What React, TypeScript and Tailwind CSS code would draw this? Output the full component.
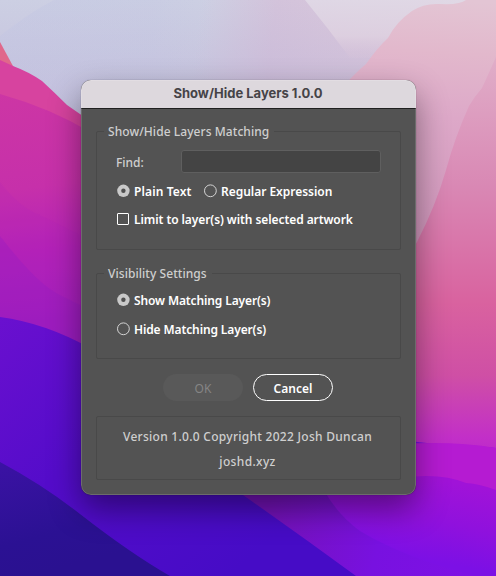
import type { ReactNode } from "react";

function Wallpaper() {
  return (
    <svg className="absolute inset-0" width="496" height="576" viewBox="0 0 496 576" fill="none">
      <defs>
        <linearGradient id="sky" x1="0" y1="0" x2="496" y2="60" gradientUnits="userSpaceOnUse">
          <stop stopColor="#cccfe3" />
          <stop offset=".4" stopColor="#cdd0e3" />
          <stop offset=".55" stopColor="#d3c3db" />
          <stop offset="1" stopColor="#e0cedc" />
        </linearGradient>
        <linearGradient id="haze" x1="0" y1="0" x2="0" y2="140" gradientUnits="userSpaceOnUse">
          <stop stopColor="#bfb2d6" stopOpacity="0" />
          <stop offset="1" stopColor="#bfb2d6" stopOpacity=".75" />
        </linearGradient>
        <linearGradient id="cloud" x1="330" y1="0" x2="330" y2="60" gradientUnits="userSpaceOnUse">
          <stop stopColor="#e0d9e6" stopOpacity=".9" />
          <stop offset=".6" stopColor="#dfd2e1" stopOpacity=".8" />
          <stop offset="1" stopColor="#d8c2d8" stopOpacity=".1" />
        </linearGradient>
        <linearGradient id="mist" x1="60" y1="0" x2="215" y2="0" gradientUnits="userSpaceOnUse">
          <stop stopColor="#bfc3e3" stopOpacity=".3" />
          <stop offset=".6" stopColor="#bfc3e3" stopOpacity=".25" />
          <stop offset="1" stopColor="#bfc3e3" stopOpacity="0" />
        </linearGradient>
        <linearGradient id="rose" x1="440" y1="0" x2="425" y2="260" gradientUnits="userSpaceOnUse">
          <stop stopColor="#e3c5d4" />
          <stop offset=".2" stopColor="#e2b8cc" />
          <stop offset=".45" stopColor="#dda8c8" />
          <stop offset="1" stopColor="#cf94ba" />
        </linearGradient>
        <linearGradient id="rose2" x1="450" y1="60" x2="450" y2="480" gradientUnits="userSpaceOnUse">
          <stop stopColor="#e0adc8" />
          <stop offset=".3" stopColor="#d988b4" />
          <stop offset=".58" stopColor="#d9629f" />
          <stop offset=".75" stopColor="#cf4fa5" />
          <stop offset=".9" stopColor="#c22fc8" />
          <stop offset="1" stopColor="#b41fd0" />
        </linearGradient>
        <linearGradient id="magenta" x1="0" y1="90" x2="30" y2="340" gradientUnits="userSpaceOnUse">
          <stop stopColor="#cd36a4" />
          <stop offset=".4" stopColor="#c630aa" />
          <stop offset=".65" stopColor="#b422b8" />
          <stop offset="1" stopColor="#9d1dbe" />
        </linearGradient>
        <linearGradient id="indigo" x1="0" y1="316" x2="230" y2="576" gradientUnits="userSpaceOnUse">
          <stop stopColor="#6a10cf" />
          <stop offset=".45" stopColor="#540cca" />
          <stop offset="1" stopColor="#460cc6" />
        </linearGradient>
        <linearGradient id="navy" x1="0" y1="462" x2="30" y2="576" gradientUnits="userSpaceOnUse">
          <stop stopColor="#3b12a4" />
          <stop offset=".7" stopColor="#2b1193" />
          <stop offset="1" stopColor="#2a1190" />
        </linearGradient>
        <linearGradient id="violet" x1="270" y1="500" x2="496" y2="560" gradientUnits="userSpaceOnUse">
          <stop stopColor="#7412b8" />
          <stop offset=".5" stopColor="#7811e0" />
          <stop offset="1" stopColor="#8010e6" />
        </linearGradient>
        <linearGradient id="plum" x1="440" y1="480" x2="425" y2="560" gradientUnits="userSpaceOnUse">
          <stop stopColor="#a013d8" />
          <stop offset=".5" stopColor="#9011dd" />
          <stop offset="1" stopColor="#7c10e5" />
        </linearGradient>
      </defs>
      <path d="M0 0H496V576H0Z" fill="url(#sky)" />
      <path d="M0 0H496V180H0Z" fill="url(#haze)" />
      <path d="M0 36Q30 12 54 0H220V130H0Z" fill="url(#mist)" />
      <path d="M305 0H496V60L350 58Q328 28 305 0Z" fill="url(#cloud)" />
      <path d="M340 90Q355 73 366 64Q378 47 388 38Q396 22 412 11Q424 3 440 4Q460 5 466 0H496V480H340Z" fill="url(#rose)" />
      <path d="M496 57Q488 75 482 88Q475 96 469 106Q455 137 446 170Q436 205 417 242L400 270V480H496Z" fill="url(#rose2)" />
      <path d="M0 42L13.5 67L0 70Z" fill="#e0688b" />
      <path d="M0 60L13 66Q29 72 42 81Q55 93 67 105L90 121V360H0Z" fill="#d7439f" />
      <path d="M0 94Q50 108 90 132V360H0Z" fill="url(#magenta)" />
      <path d="M0 182Q20 208 40 215Q70 230 90 240V360H0Z" fill="#ae22bc" opacity=".15" />
      <path d="M0 236Q38 285 60 295L90 310V370H0Z" fill="#911bc2" opacity=".3" />
      <path d="M0 317Q45 323 90 348L300 500 370 576H0Z" fill="url(#indigo)" />
      <path d="M0 462Q43 485 80 514Q130 553 170 576H0Z" fill="url(#navy)" />
      <path d="M180 450L400 440Q450 446 496 448V576H356Q300 535 243 495Z" fill="url(#violet)" />
      <path d="M320 480L410 444Q455 443 496 448V576H475Q405 558 360 531Q339 516 325 492Z" fill="url(#plum)" />
      <path d="M400 444Q455 441 496 448V490Q480 484 466 483Q440 472 400 478Z" fill="#b51bd2" />
    </svg>
  );
}

function Radio({ checked = false }: { checked?: boolean }) {
  return (
    <svg className="h-[14px] w-[14px] shrink-0" viewBox="0 0 14 14">
      {checked ? (
        <>
          <circle cx="7.4" cy="6.8" r="6.2" fill="#c9c9c9" />
          <circle cx="7.4" cy="6.8" r="2.2" fill="#505050" />
        </>
      ) : (
        <circle cx="7.4" cy="6.8" r="5.9" fill="none" stroke="#d4d4d4" />
      )}
    </svg>
  );
}

function Group({ title, className, children }: { title?: string; className: string; children: ReactNode }) {
  return (
    <section className={"relative rounded-[2px] border border-[#494949] " + className}>
      {title && (
        <h2 className="absolute -top-[9px] left-[7px] h-[18px] bg-[#535353] pr-[5px] pl-[4px] leading-[18px] font-medium tracking-[0.06px] text-[#cfcfcf]">
          {title}
        </h2>
      )}
      {children}
    </section>
  );
}

export default function App() {
  return (
    <main className="relative h-[576px] w-[496px] overflow-hidden pt-[80px] pl-[81px] font-['Noto_Sans',sans-serif] text-[12px]">
      <Wallpaper />
      <div className="relative flex h-[415px] w-[335px] flex-col overflow-hidden rounded-[10px] bg-[#535353] whitespace-nowrap shadow-[0_0_1px_rgba(0,0,0,0.5),0_14px_32px_rgba(0,0,0,0.42)]">
        <header className="flex h-[29px] shrink-0 items-center justify-center border-b border-[#202020] bg-[#ddd8dd] pr-[1px] pb-[1px] font-['Inter',sans-serif] text-[13px] font-bold text-[#464347]">
          Show/Hide Layers 1.0.0
        </header>
        <div className="flex flex-col px-[15px] pt-[22px]">
          <Group title="Show/Hide Layers Matching" className="h-[119px] px-[19px] pt-[18px]">
            <div className="flex h-[23px] items-center">
              <label className="w-[65px] pt-[2px] font-medium text-[#cfcfcf]">Find:</label>
              <input className="h-[23px] w-[200px] rounded-[3px] border border-[#5f5f5f] bg-[#444444]" />
            </div>
            <div className="mt-[8px] flex h-[20px] items-center font-semibold text-white">
              <Radio checked />
              <span className="ml-[4px] w-[69px] pt-[2px] tracking-[0.12px]">Plain Text</span>
              <Radio />
              <span className="ml-[4px] pt-[2px] tracking-[-0.03px]">Regular Expression</span>
            </div>
            <div className="mt-[8px] flex h-[20px] items-center font-semibold text-white">
              <span className="ml-[1px] h-[12px] w-[12px] rounded-[1px] border border-white" />
              <span className="ml-[5px] pt-[2px] tracking-[-0.08px]">Limit to layer(s) with selected artwork</span>
            </div>
          </Group>
          <Group title="Visibility Settings" className="mt-[23px] h-[86px] px-[19px] pt-[16px] font-semibold text-white">
            <div className="flex h-[20px] items-center">
              <Radio checked />
              <span className="ml-[4px] pt-[2px] tracking-[-0.12px]">Show Matching Layer(s)</span>
            </div>
            <div className="mt-[9px] flex h-[20px] items-center">
              <Radio />
              <span className="ml-[4px] pt-[2px] tracking-[-0.12px]">Hide Matching Layer(s)</span>
            </div>
          </Group>
          <div className="mt-[15px] flex h-[27px] gap-[10px] pl-[67px]">
            <button className="w-[80px] rounded-full bg-[#595959] pt-[2px] text-[#858585]">OK</button>
            <button className="w-[80px] rounded-full border border-white px-0 pt-[2px] font-semibold text-white">Cancel</button>
          </div>
          <Group className="mt-[15px] flex h-[64px] flex-col items-center pt-[10px] pr-[2px] font-medium text-[#cfcfcf]">
            <p className="leading-[20px] tracking-[0.28px]">Version 1.0.0 Copyright 2022 Josh Duncan</p>
            <p className="mt-[5px] leading-[20px] tracking-[0.35px]">joshd.xyz</p>
          </Group>
        </div>
        <div className="pointer-events-none absolute inset-0 rounded-[10px] border border-white/15" />
      </div>
    </main>
  );
}
